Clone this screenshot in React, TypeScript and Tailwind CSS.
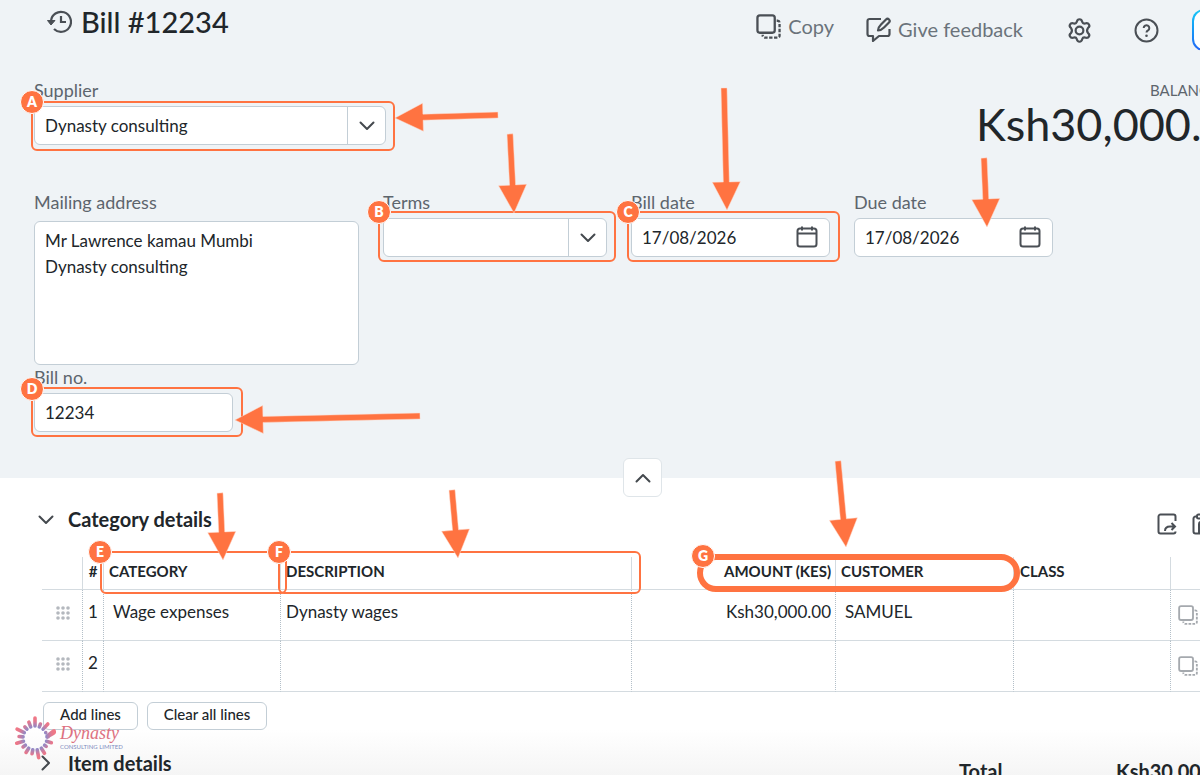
import React from 'react';

const ORANGE = '#ff7341';

// tip first, then tail
const arrows = [
  [395, 118, 498, 115],
  [514, 213, 510, 134],
  [727, 210, 724, 88],
  [987, 227, 984, 158],
  [235, 420, 420, 416],
  [223, 560, 220, 493],
  [458, 558, 452, 490],
  [846, 547, 838, 461],
];

const Arrow = ({ x, y, tx, ty }: { x: number; y: number; tx: number; ty: number }) => {
  const len = Math.hypot(tx - x, ty - y);
  const ux = (tx - x) / len;
  const uy = (ty - y) / len;
  const at = (along: number, side: number) => `${x + ux * along - uy * side},${y + uy * along + ux * side}`;
  const points = [at(0, 0), at(28, 14), at(28, 3), at(len, 3), at(len, -3), at(28, -3), at(28, -14)];
  return <polygon points={points.join(' ')} fill={ORANGE} stroke="#ffd9ca" strokeWidth="0.5" />;
};

const Badge = ({ letter, className }: { letter: string; className: string }) => (
  <span
    className={`absolute z-20 flex size-6 items-center justify-center rounded-full border border-white bg-[#ff7341] text-sm leading-none font-extrabold text-white ${className}`}
  >
    {letter}
  </span>
);

const Chevron = ({ className = '' }: { className?: string }) => (
  <svg className={className} width="16" height="10" viewBox="0 0 16 10" fill="none" stroke="#44494e" strokeWidth="2">
    <path d="M1.5 1.5 8 8l6.5-6.5" strokeLinecap="round" strokeLinejoin="round" />
  </svg>
);

const CopyIcon = ({ size }: { size: number }) => (
  <svg width={size} height={size} viewBox="0 0 26 26" fill="none" stroke="currentColor" strokeWidth="2.4">
    <rect x="1.5" y="1.5" width="18" height="18" rx="2.5" />
    <path d="M21.5 7h1A2 2 0 0 1 24.5 9V22.5a2 2 0 0 1-2 2H9a2 2 0 0 1-2-2v-1" strokeDasharray="3.5 1.6" />
  </svg>
);

const CalendarIcon = () => (
  <svg className="absolute top-2 right-3" width="22" height="22" viewBox="0 0 22 22" fill="none" stroke="#4a4f55" strokeWidth="2">
    <rect x="1.5" y="2.5" width="19" height="18" rx="2.5" />
    <path d="M1.5 7.5h19M6 .5v4M16 .5v4" />
  </svg>
);

const Grip = () => (
  <svg width="14" height="14" viewBox="0 0 14 14" fill="#b4b8be">
    {[2, 7, 12].map((cy) => [2, 7, 12].map((cx) => <circle key={`${cx}-${cy}`} cx={cx} cy={cy} r="1.8" />))}
  </svg>
);

const box = 'h-[39px] w-full appearance-none rounded-md border border-[#c3ced6] bg-white pl-[10px] text-[#21262a] outline-none';
const label = 'block h-7 text-lg text-[#5d656d] leading-6';
const mark = 'pointer-events-none absolute z-10 rounded-md border-2 border-[#ff7341]';

const DateField = ({ id, name }: { id: string; name: string }) => (
  <>
    <label htmlFor={id} className={label}>{name}</label>
    <div className="relative">
      <input id={id} type="text" defaultValue="17/08/2026" className={box} />
      <CalendarIcon />
    </div>
  </>
);

const spokes = [20, 15, 19, 0, 13, 17, 14, 18, 20, 16, 17, 15, 19, 16, 20, 15, 17];

const Burst = () => (
  <svg width="42" height="44" viewBox="-21 -22 42 44">
    <defs>
      <radialGradient id="burst" gradientUnits="userSpaceOnUse" cx="0" cy="0" r="20">
        <stop offset="0.55" stopColor="#9189c6" />
        <stop offset="0.85" stopColor="#e3788f" />
        <stop offset="1" stopColor="#f07886" />
      </radialGradient>
    </defs>
    {spokes.map((r, i) => (
      <path
        key={i}
        d={`M0 -12V-${Math.max(r, 12)}`}
        transform={`rotate(${(i * 360) / spokes.length})`}
        stroke="url(#burst)"
        strokeWidth="3.6"
        strokeLinecap="round"
      />
    ))}
    <path d="M10.5 -3 17.5 -8.5q3-1.5 3.5 1.5t-2 4L12 1z" fill="url(#burst)" />
  </svg>
);

const th = 'relative h-[33px] border-r border-b border-[#d4dbe0] p-0 pb-[3px] text-[15px] font-bold whitespace-nowrap';
const td = 'h-[51px] border-b border-[#d4dbe0] border-r border-r-[#b3bfc8] [border-right-style:dotted] pt-[10px] pb-0 align-top whitespace-nowrap leading-6';

const App = () => {
  return (
    <div className="relative h-screen overflow-hidden bg-white font-['Lato','Liberation_Sans',sans-serif] text-[17px] text-[#21262a]">
      <section className="relative h-[478px] bg-[#eff3f6]">
        <header className="flex justify-between pl-[47px]">
          <div className="flex h-11 items-center gap-[9px]">
            <svg width="25" height="24" viewBox="0 0 25 24" fill="none" stroke="#4a4f55" strokeWidth="2.2">
              <path d="M4 11a10 10 0 1 1 3 8" />
              <path d="M14 6v6h5" />
              <path d="M.5 10.5 4 15l4-4.500z" fill="#4a4f55" strokeWidth="1" />
            </svg>
            <h1 className="text-[29px] leading-9 font-medium">Bill #12234</h1>
          </div>
          <div className="flex h-14 items-center text-xl text-[#6b737b]">
            <button type="button" className="mr-8 flex items-center gap-[7px] pb-1">
              <span className="text-[#4a4f55]"><CopyIcon size={25} /></span>Copy
            </button>
            <button type="button" className="mr-11 flex items-center gap-[7px] pt-[2px]">
              <svg width="25" height="25" viewBox="0 0 25 25" fill="none" stroke="#4a4f55" strokeWidth="2.2">
                <path d="M15 2H3.5A2 2 0 0 0 1.5 4v13a2 2 0 0 0 2 2H7v5l6-5h8.500a2 2 0 0 0 2-2v-5" strokeLinejoin="round" />
                <path d="M12 13.500c0-3 1-4 3-6l5-5a1.800 1.800 0 0 1 3 3l-5 5c-2 2-3 3-6 3z" strokeLinejoin="round" />
              </svg>
              Give feedback
            </button>
            <button type="button" aria-label="Settings" className="mr-[42px] pt-1">
              <svg width="25" height="25" viewBox="0 0 24 24" fill="none" stroke="#4a4f55" strokeWidth="2.1" strokeLinejoin="round">
                <path d="M9.400 3.700Q9.900 1.200 12 1.200T14.600 3.700Q15.300 5.700 17.400 5.200Q20 4.300 21.100 6.200T20.200 9.500Q18.300 12 20.200 14.500Q22.100 15.900 21.100 17.800T17.400 18.800Q15.300 18.300 14.600 20.300Q14.100 22.800 12 22.800T9.400 20.300Q8.700 18.300 6.600 18.800Q4 19.700 2.900 17.800T3.800 14.500Q5.700 12 3.800 9.500Q1.900 8.100 2.900 6.200T6.600 5.200Q8.700 5.700 9.400 3.700z" />
                <circle cx="12" cy="12" r="3.7" />
              </svg>
            </button>
            <button type="button" aria-label="Help" className="mr-[33px] pt-1">
              <svg width="25" height="25" viewBox="0 0 25 25" fill="none" stroke="#4a4f55" strokeWidth="2">
                <circle cx="12.5" cy="12.5" r="11" />
                <path d="M9.700 10a2.800 2.800 0 1 1 4.300 2.400c-1 .6-1.500 1-1.500 2.200" />
                <circle cx="12.5" cy="17.8" r="1.3" fill="#4a4f55" stroke="none" />
              </svg>
            </button>
            <button type="button" aria-label="Assistant" className="-mr-8 mt-1 h-[42px] w-10 rounded-xl bg-linear-to-b from-[#1cc8f5] to-[#2463f5] p-[2px]">
              <span className="block h-full rounded-[10px] bg-white" />
            </button>
          </div>
        </header>

        <div className="flex justify-between pl-[34px]">
          <div className="mt-[22px] w-[352px]">
            <label htmlFor="supplier" className={label}>Supplier</label>
            <div className="relative">
              <select id="supplier" className={box}>
                <option>Dynasty consulting</option>
              </select>
              <div className="pointer-events-none absolute top-px right-px bottom-px flex w-[38px] items-center justify-center border-l border-[#c3ced6]">
                <Chevron />
              </div>
              <div className={`${mark} -top-[5px] -right-[9px] -bottom-[6px] -left-[3px]`} />
              <Badge letter="A" className="-top-4 -left-3.5" />
            </div>
          </div>
          <div className="mt-[22px] w-[224px] whitespace-nowrap">
            <p className="pl-[174px] text-[15px] leading-6 text-[#5d656d]">BALANCE DUE</p>
            <p className="text-[45px] leading-[44px]">Ksh30,000.00</p>
          </div>
        </div>

        <div className="mt-11 flex items-start px-[34px]">
          <div className="mr-6 w-[325px]">
            <label htmlFor="address" className="block h-[31px] text-lg leading-6 text-[#5d656d]">Mailing address</label>
            <textarea
              id="address"
              className="block h-36 w-full resize-none rounded-md border border-[#c3ced6] bg-white px-[10px] py-[6px] leading-[26px] outline-none"
              defaultValue={'Mr Lawrence kamau Mumbi\nDynasty consulting'}
            />
            <div className="w-[199px]">
              <label htmlFor="billno" className={label}>Bill no.</label>
              <div className="relative">
                <input id="billno" type="text" defaultValue="12234" className={box} />
                <div className={`${mark} -top-[6px] -right-[10px] -bottom-[5px] -left-[3px]`} />
                <Badge letter="D" className="-top-4 -left-3.5" />
              </div>
            </div>
          </div>
          <div className="mr-6 w-[224px]">
            <label htmlFor="terms" className={label}>Terms</label>
            <div className="relative">
              <select id="terms" className={box}>
                <option></option>
              </select>
              <div className="pointer-events-none absolute top-px right-px bottom-px flex w-[38px] items-center justify-center border-l border-[#c3ced6]">
                <Chevron />
              </div>
              <div className={`${mark} -top-[7px] -right-[9px] -bottom-[5px] -left-[5px]`} />
              <Badge letter="B" className="-top-[18px] -left-4" />
            </div>
          </div>
          <div className="relative mr-6 w-[199px]">
            <DateField id="billdate" name="Bill date" />
            <div className={`${mark} top-[21px] -right-[10px] -bottom-[5px] -left-[4px]`} />
            <Badge letter="C" className="top-[10px] -left-[15px]" />
          </div>
          <div className="w-[199px]">
            <DateField id="duedate" name="Due date" />
          </div>
        </div>

        <button
          type="button"
          aria-label="Collapse"
          className="absolute -bottom-[19px] left-[623px] flex size-[39px] items-center justify-center rounded-md border border-[#dfe5e9] bg-white"
        >
          <Chevron className="rotate-180" />
        </button>
      </section>

      <section className="pl-[38px]">
        <div className="mt-6 flex h-9 items-center">
          <button type="button" aria-label="Toggle category details"><Chevron /></button>
          <h2 className="ml-3.5 pb-[2px] text-xl font-bold">Category details</h2>
          <div className="mt-2 -mr-[10px] ml-auto flex gap-[15px]">
            <svg width="20" height="22" viewBox="0 0 20 22" fill="none" stroke="#4a4f55" strokeWidth="2">
              <path d="M18.500 8V3.500a2 2 0 0 0-2-2h-13a2 2 0 0 0-2 2v15a2 2 0 0 0 2 2h13a2 2 0 0 0 2-2" />
              <path d="M8 18c0-3 2-4.500 5-4.500h4.500M14.500 10l3.500 3.500-3.500 3.500" />
            </svg>
            <svg width="18" height="22" viewBox="0 0 18 22" fill="none" stroke="#4a4f55" strokeWidth="2">
              <path d="M5 3.500H3.500a2 2 0 0 0-2 2v13a2 2 0 0 0 2 2H17M7 20V11a2 2 0 0 1 2-2h8" />
              <rect x="5" y="1.5" width="9" height="4" rx="1.5" />
            </svg>
          </div>
        </div>

        <div className="mt-[19px] pl-1">
          <table className="w-full table-fixed border-separate border-spacing-0 text-left">
            <colgroup>
              <col className="w-[41px]" />
              <col className="w-[21px]" />
              <col className="w-[177px]" />
              <col />
              <col className="w-[204px]" />
              <col className="w-[178px]" />
              <col className="w-[157px]" />
              <col className="w-[29px]" />
            </colgroup>
            <thead>
              <tr>
                <th className={th}></th>
                <th className={`${th} text-center`}>#</th>
                <th className={th}>
                  <span className="pl-[5px]">CATEGORY</span>
                  <div className={`${mark} -top-[6px] -right-[7px] -bottom-[5px] -left-[4px]`} />
                  <Badge letter="E" className="-top-[17px] -left-4" />
                </th>
                <th className={th}>
                  <span className="pl-[5px]">DESCRIPTION</span>
                  <div className={`${mark} -top-[6px] -right-[10px] -bottom-[5px] -left-[3px]`} />
                  <Badge letter="F" className="-top-[17px] -left-3.5" />
                </th>
                <th className={`${th} text-right`}><span className="pr-1">AMOUNT (KES)</span></th>
                <th className={th}>
                  <span className="pl-[5px]">CUSTOMER</span>
                  <div className="pointer-events-none absolute -top-[3px] -right-[7px] -bottom-[3px] -left-[139px] z-10 rounded-[20px] border-[6px] border-[#ff7341]" />
                  <Badge letter="G" className="-top-[13px] -left-[145px]" />
                </th>
                <th className={th}><span className="pl-[6px]">CLASS</span></th>
                <th className="border-b border-[#d4dbe0]"></th>
              </tr>
            </thead>
            <tbody>
              {[
                ['1', 'Wage expenses', 'Dynasty wages', 'Ksh30,000.00', 'SAMUEL'],
                ['2', '', '', '', ''],
              ].map(([no, category, description, amount, customer]) => (
                <tr key={no}>
                  <td className={`${td} pl-3.5`}><div className="pt-[6px]"><Grip /></div></td>
                  <td className={`${td} text-center`}>{no}</td>
                  <td className={`${td} pl-[9px]`}>{category}</td>
                  <td className={`${td} pl-[5px]`}>{description}</td>
                  <td className={`${td} pr-1 text-right`}>{amount}</td>
                  <td className={`${td} pl-[9px]`}>{customer}</td>
                  <td className={td}></td>
                  <td className="h-[51px] border-b border-[#d4dbe0] p-0 pl-[7px] text-[#a5a9ae]"><CopyIcon size={20} /></td>
                </tr>
              ))}
            </tbody>
          </table>
        </div>

        <div className="mt-[10px] flex gap-[9px] pl-[5px] text-[15px] font-medium">
          <button type="button" className="h-7 w-[95px] rounded-md border border-[#c3ced6] bg-white pb-1 leading-[22px]">Add lines</button>
          <button type="button" className="h-7 w-[120px] rounded-md border border-[#c3ced6] bg-white pb-1 leading-[22px]">Clear all lines</button>
        </div>

        <div className="-ml-[38px] flex h-16 items-center bg-linear-to-b from-white to-[#f1f1f1] pt-[2px] pl-[38px] text-xl font-bold">
          <button type="button" aria-label="Toggle item details"><Chevron className="-rotate-90" /></button>
          <h2 className="ml-3.5">Item details</h2>
          <div className="mt-4 ml-auto flex w-[241px] whitespace-nowrap">
            <span className="w-[157px] shrink-0">Total</span>
            <span className="shrink-0">Ksh30,000.00</span>
          </div>
        </div>
      </section>

      <div className="absolute top-[716px] left-[14px] flex items-center gap-1">
        <Burst />
        <div>
          <div className="font-['Liberation_Serif',serif] text-lg leading-[18px] text-[#dd7080] italic">Dynasty</div>
          <div className="text-[6px] leading-[10px] text-[#7f8cc0]">CONSULTING LIMITED</div>
        </div>
      </div>

      <svg className="pointer-events-none absolute top-0 left-0 z-30" width="1200" height="775" viewBox="0 0 1200 775">
        {arrows.map(([x, y, tx, ty]) => (
          <Arrow key={`${x}-${y}`} x={x} y={y} tx={tx} ty={ty} />
        ))}
      </svg>
    </div>
  );
};

export default App;
